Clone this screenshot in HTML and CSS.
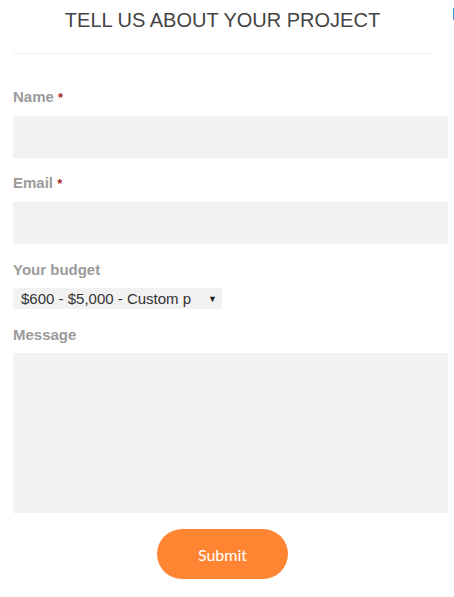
FILE: index.html
```html
<!DOCTYPE html>
<html>
<head>
<meta charset="utf-8">
<link rel="stylesheet" href="styles.css">
</head>
<body>
<div class="edge-mark"></div>
<form class="form">
  <div class="head">
    <h2 class="title">TELL US ABOUT YOUR PROJECT</h2>
  </div>
  <div class="field">
    <label class="label">Name <span class="req">*</span></label>
    <input class="input" type="text">
  </div>
  <div class="field">
    <label class="label">Email <span class="req">*</span></label>
    <input class="input" type="text">
  </div>
  <div class="field">
    <label class="label">Your budget</label>
    <div class="select"><span class="select-text">$600 - $5,000 - Custom p</span><span class="caret">▼</span></div>
  </div>
  <div class="field">
    <label class="label">Message</label>
    <textarea class="textarea"></textarea>
  </div>
  <div class="actions">
    <button class="submit" type="button">Submit</button>
  </div>
</form>
</body>
</html>
```
FILE: styles.css
```css
html, body { margin: 0; padding: 0; background: #fff; }
body { font-family: "Liberation Sans", Arial, sans-serif; position: relative; width: 454px; height: 597px; overflow: hidden; }
.edge-mark { position: absolute; left: 453px; top: 8px; width: 1px; height: 12px; background: #3a9bef; }
.form { padding: 0 6px 0 13px; display: flex; flex-direction: column; }
.head { width: 419px; border-bottom: 1px solid #efefef; padding: 9px 0 21px; }
.title { margin: 0; font-size: 20px; font-weight: normal; color: #444; text-align: center; line-height: 23px; }
.field { display: flex; flex-direction: column; }
.label { display: block; font-size: 15px; font-weight: bold; color: #9b9b9b; line-height: 17px; margin-top: 34px; margin-bottom: 10px; }
.req { color: #a52a2a; font-size: 13px; }
.input { display: block; box-sizing: border-box; width: 435px; height: 42px; border: 0; background: #f2f2f2; margin: 0; padding: 0; }
.field:nth-child(3) .label { margin-top: 16px; }
.field:nth-child(4) .label { margin-top: 17px; }
.field:nth-child(5) .label { margin-top: 17px; }
.select { box-sizing: border-box; width: 209px; height: 21px; background: #f2f2f2; display: flex; align-items: center; padding-left: 8px; font-size: 15px; color: #333; overflow: hidden; }
.select-text { width: 179px; overflow: hidden; white-space: nowrap; }
.caret { font-size: 9px; margin-left: 8px; color: #222; }
.textarea { display: block; box-sizing: border-box; width: 435px; height: 160px; border: 0; background: #f2f2f2; margin: 0; resize: none; }
.actions { width: 419px; display: flex; justify-content: center; padding-top: 16px; }
.submit { width: 131px; height: 50px; border: 0; border-radius: 25px; background: #ff8533; color: #fff; font-family: Lato, "Open Sans", sans-serif; font-size: 16px; }
```
